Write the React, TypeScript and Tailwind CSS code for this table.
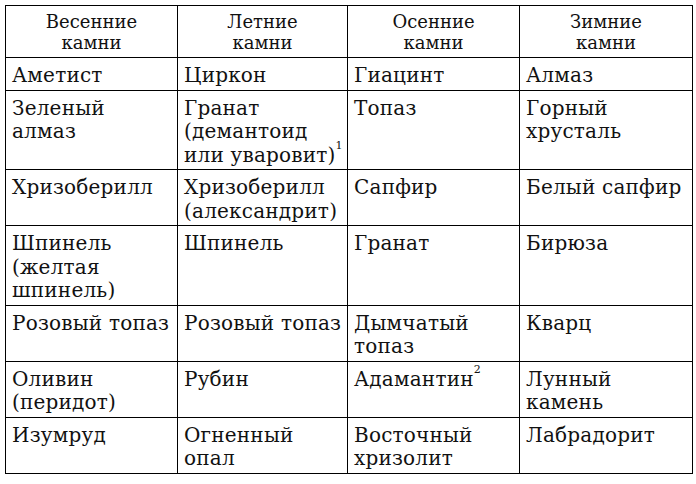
import React from 'react'

type Cell = React.ReactNode

// заголовки столбцов
const head: string[][] = [
  ['Весенние', 'камни'],
  ['Летние', 'камни'],
  ['Осенние', 'камни'],
  ['Зимние', 'камни'],
]

const Sup = ({ n }: { n: string }) => (
  <sup className="text-[11px] align-[7px] leading-none">{n}</sup>
)

const rows: Cell[][] = [
  ['Аметист', 'Циркон', 'Гиацинт', 'Алмаз'],
  [
    <>Зеленый<br />алмаз</>,
    <>Гранат<br />(демантоид<br />или уваровит)<Sup n="1" /></>,
    'Топаз',
    <>Горный<br />хрусталь</>,
  ],
  ['Хризоберилл', <>Хризоберилл<br />(александрит)</>, 'Сапфир', 'Белый сапфир'],
  [<>Шпинель<br />(желтая<br />шпинель)</>, 'Шпинель', 'Гранат', 'Бирюза'],
  ['Розовый топаз', 'Розовый топаз', <>Дымчатый<br />топаз</>, 'Кварц'],
  [
    <>Оливин<br />(перидот)</>,
    'Рубин',
    <>Адамантин<Sup n="2" /></>,
    <>Лунный<br />камень</>,
  ],
  ['Изумруд', <>Огненный<br />опал</>, <>Восточный<br />хризолит</>, 'Лабрадорит'],
]

const widths = ['w-[172px]', 'w-[170px]', 'w-[172px]', 'w-[173px]']

export default function App() {
  return (
    <div className="w-[696px] h-[484px] bg-white pt-[5px] pl-[5px] text-[#111]">
      <table className="border-collapse table-fixed w-[687px] font-['DejaVu_Serif']">
        <colgroup>
          {widths.map((w, i) => (
            <col key={i} className={w} />
          ))}
        </colgroup>
        <thead>
          <tr>
            {head.map((h, i) => (
              <th
                key={i}
                className="font-['DejaVu_Serif'] border border-black font-normal text-center text-[18px] leading-[21px] pt-[5px] pb-[4px] px-1"
              >
                {h[0]}
                <br />
                {h[1]}
              </th>
            ))}
          </tr>
        </thead>
        <tbody>
          {rows.map((r, ri) => (
            <tr key={ri}>
              {r.map((c, ci) => (
                <td
                  key={ci}
                  className="font-['DejaVu_Serif'] border border-black align-top text-left text-[20px] leading-[23.5px] tracking-[0.2px] pl-[6px] pr-1 pt-[6px] pb-[2px] whitespace-nowrap"
                >
                  {c}
                </td>
              ))}
            </tr>
          ))}
        </tbody>
      </table>
    </div>
  )
}
